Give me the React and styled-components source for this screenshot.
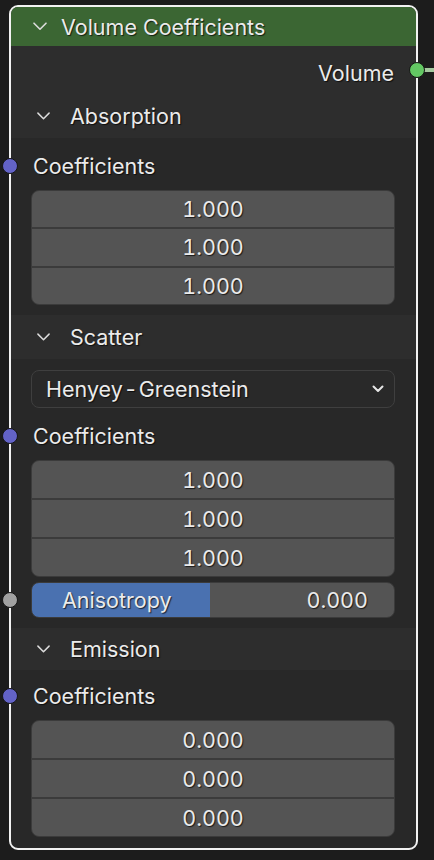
import React from 'react';
import styled, { createGlobalStyle } from 'styled-components';

const GlobalStyle = createGlobalStyle`
  html, body {
    margin: 0;
    padding: 0;
    background: #1c1c1c;
  }
  body {
    font-family: Inter, "Noto Sans", "DejaVu Sans", sans-serif;
    font-size: 21.5px;
    color: #ebebeb;
  }
`;

const
  Canvas = styled.div`
    width: 434px;
    height: 860px;
    padding: 5px 0 0 9px;
    box-sizing: border-box;
    overflow: hidden;
  `,
  Node = styled.div`
    position: relative;
    width: 409px;
    box-sizing: border-box;
    border: 2px solid #f2f2f2;
    border-radius: 9px;
    background: #282828;
    text-shadow: 1px 1px 1px rgba(0, 0, 0, 0.7);
  `,
  Header = styled.div`
    height: 39px;
    display: flex;
    align-items: center;
    gap: 14px;
    padding-left: 22px;
    background: #3b6633;
    border-radius: 7px 7px 0 0;
  `,
  OutputRow = styled.div`
    position: relative;
    height: 48px;
    padding: 9px 22px 3px 0;
    box-sizing: border-box;
    display: flex;
    align-items: center;
    justify-content: flex-end;
    background: #2d2d2d;
  `,
  PanelHeader = styled.div`
    height: ${p => p.$h}px;
    display: flex;
    align-items: center;
    gap: 20px;
    padding-left: 26px;
    background: #2d2d2d;
  `,
  PanelBody = styled.div`
    display: flex;
    flex-direction: column;
    padding: ${p => p.$pad};
    padding-left: 20px;
    padding-right: 21px;
  `,
  InputRow = styled.div`
    position: relative;
    height: 36px;
    display: flex;
    align-items: center;
    margin-left: 2px;
    margin-top: ${p => p.$mt || 0}px;
  `,
  Socket = styled.span`
    position: absolute;
    top: 50%;
    left: ${p => p.$x}px;
    width: 14px;
    height: 14px;
    border-radius: 50%;
    border: 1px solid #161616;
    background: ${p => p.$color};
    transform: translate(-50%, -50%);
    z-index: 2;
  `,
  OutSocket = styled(Socket)`
    left: auto;
    right: -1px;
    transform: translate(50%, -50%);
  `,
  Link = styled.span`
    position: absolute;
    top: 50%;
    right: -18px;
    width: 12px;
    height: 4px;
    background: #a5c89f;
    transform: translateY(-50%);
  `,
  VectorGroup = styled.div`
    height: ${p => p.$h}px;
    margin-top: 6px;
    display: flex;
    flex-direction: column;
    gap: 2px;
    border: 1px solid #3b3b3b;
    border-radius: 8px;
    background: #3b3b3b;
    overflow: hidden;
    box-sizing: border-box;
  `,
  Cell = styled.div`
    flex: 1;
    display: flex;
    align-items: center;
    justify-content: center;
    background: #545454;
    font-variant-numeric: tabular-nums;
  `,
  Dropdown = styled.div`
    height: 38px;
    box-sizing: border-box;
    display: flex;
    align-items: center;
    justify-content: space-between;
    padding: 0 10px 0 14px;
    border: 1px solid #3f3f3f;
    border-radius: 8px;
    background: #292929;
  `,
  Hyphen = styled.span`
    margin: 0 3px;
  `,
  Slider = styled.div`
    position: relative;
    height: 36px;
    margin-top: 5px;
    box-sizing: border-box;
    display: flex;
    align-items: center;
    justify-content: space-between;
    padding: 0 26px 0 30px;
    border: 1px solid #3b3b3b;
    border-radius: 8px;
    background: linear-gradient(to right, #4a71b0 0, #4a71b0 ${p => p.$fill}px, #545454 ${p => p.$fill}px);
  `,
  Value = styled.span`
    font-variant-numeric: tabular-nums;
  `;

const Chevron = ({ size = 14 }) => (
  <svg width={size} height={size * 0.6} viewBox="0 0 14 8" fill="none">
    <polyline points="1,1 7,7 13,1" stroke="#dcdcdc" strokeWidth="1.6" strokeLinecap="round" strokeLinejoin="round" />
  </svg>
);

const SmallChevron = () => (
  <svg width="12" height="8" viewBox="0 0 12 8" fill="none">
    <polyline points="1.5,1.5 6,6 10.5,1.5" stroke="#e6e6e6" strokeWidth="2" strokeLinecap="round" strokeLinejoin="round" />
  </svg>
);

const Vector = ({ values, h = 117 }) => (
  <VectorGroup $h={h}>
    {values.map((v, i) => <Cell key={i}>{v}</Cell>)}
  </VectorGroup>
);

const Coefficients = ({ mt }) => (
  <InputRow $mt={mt}>
    <Socket $x={-23} $color="#6363c7" />
    Coefficients
  </InputRow>
);

const App = () => {
  return (
    <>
      <GlobalStyle />
      <Canvas>
        <Node>
          <Header>
            <Chevron />
            Volume Coefficients
          </Header>
          <OutputRow>
            Volume
            <OutSocket $color="#63c763" />
            <Link />
          </OutputRow>

          <PanelHeader $h={44}>
            <Chevron size={13} />
            Absorption
          </PanelHeader>
          <PanelBody $pad="10px 0 10px">
            <Coefficients />
            <Vector h={115} values={['1.000', '1.000', '1.000']} />
          </PanelBody>

          <PanelHeader $h={44}>
            <Chevron size={13} />
            Scatter
          </PanelHeader>
          <PanelBody $pad="11px 0 10px">
            <Dropdown>
              <span>Henyey<Hyphen>-</Hyphen>Greenstein</span>
              <SmallChevron />
            </Dropdown>
            <Coefficients mt={10} />
            <Vector values={['1.000', '1.000', '1.000']} />
            <Slider $fill={178}>
              <Socket $x={-22} $color="#a1a1a1" />
              <span>Anisotropy</span>
              <Value>0.000</Value>
            </Slider>
          </PanelBody>

          <PanelHeader $h={42}>
            <Chevron size={13} />
            Emission
          </PanelHeader>
          <PanelBody $pad="8px 0 11px">
            <Coefficients />
            <Vector values={['0.000', '0.000', '0.000']} />
          </PanelBody>
        </Node>
      </Canvas>
    </>
  );
};

export default App;
